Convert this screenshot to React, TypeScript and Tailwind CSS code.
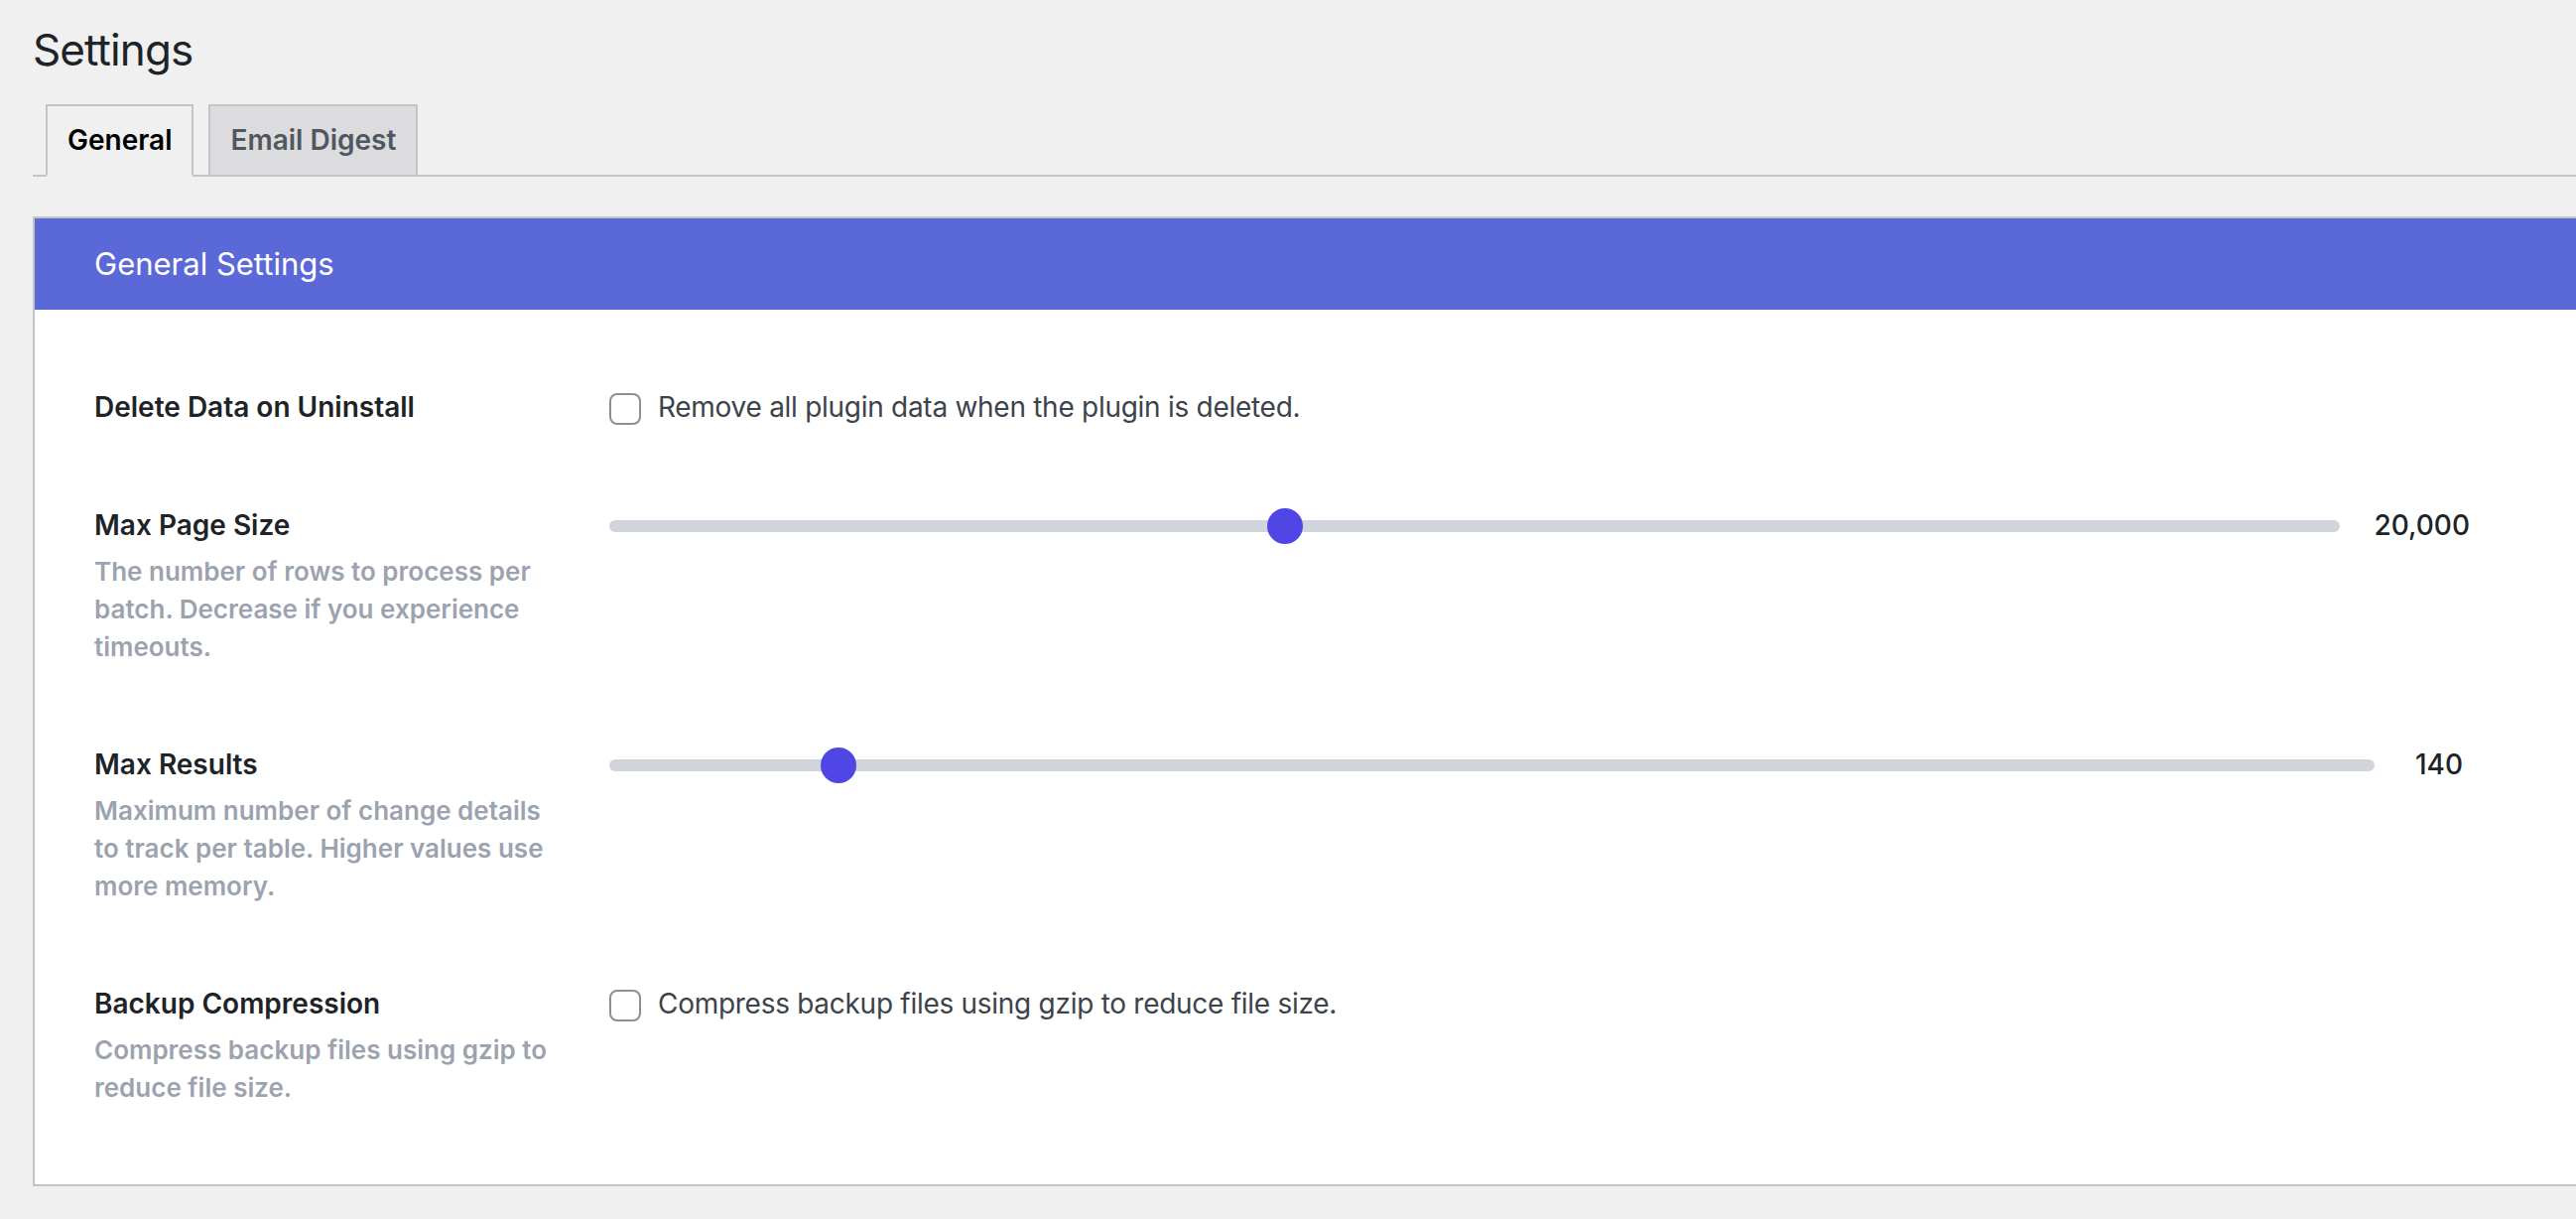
const ROWS = [
  {
    label: "Delete Data on Uninstall",
    kind: "checkbox" as const,
    text: "Remove all plugin data when the plugin is deleted.",
  },
  {
    label: "Max Page Size",
    desc: "The number of rows to process per batch. Decrease if you experience timeouts.",
    kind: "slider" as const,
    value: "20,000",
    pct: 0.388,
  },
  {
    label: "Max Results",
    desc: "Maximum number of change details to track per table. Higher values use more memory.",
    kind: "slider" as const,
    value: "140",
    pct: 0.1224,
  },
  {
    label: "Backup Compression",
    desc: "Compress backup files using gzip to reduce file size.",
    kind: "checkbox" as const,
    text: "Compress backup files using gzip to reduce file size.",
  },
];

function Slider({ value, pct }: { value: string; pct: number }) {
  return (
    <div className="flex h-[39px] items-center gap-[34px]">
      <div className="relative h-[12px] flex-1 rounded-full bg-[#d1d5db]">
        <div
          className="absolute top-1/2 h-[36px] w-[36px] -translate-y-1/2 rounded-full bg-[#4f46e5]"
          style={{ left: `calc(${pct} * (100% - 36px))` }}
        />
      </div>
      <span className="min-w-[62px] text-center text-[28px] font-medium leading-[39px] text-[#1d2327]">
        {value}
      </span>
    </div>
  );
}

function Checkbox({ text }: { text: string }) {
  return (
    <label className="flex h-[39px] items-center gap-[17px]">
      <span className="mt-[3px] h-[32px] w-[32px] shrink-0 rounded-[8px] border-2 border-[#8c8f94] bg-white" />
      <span className="text-[28px] leading-[39px] tracking-[-0.01em] text-[#3c434a]">{text}</span>
    </label>
  );
}

export default function App() {
  return (
    <div className="min-h-screen w-full overflow-hidden bg-[#f0f0f1] pl-[33px] font-[family-name:Inter,'Noto_Sans',sans-serif] text-[#1d2327]">
      <h1 className="pt-[21px] text-[44px] font-normal leading-[58px] tracking-[-0.02em]">Settings</h1>

      <div className="mt-[26px] flex border-b-2 border-[#c3c4c7]">
        <div className="-mb-[2px] ml-[13px] border-2 border-[#c3c4c7] border-b-[#f0f0f1] bg-[#f0f0f1] px-[20px] py-[14px] text-[28px] font-semibold leading-[41px] text-black">
          General
        </div>
        <div className="-mb-[2px] ml-[15px] border-2 border-[#c3c4c7] bg-[#dcdcde] px-[20px] py-[14px] text-[28px] font-semibold leading-[41px] text-[#50575e]">
          Email Digest
        </div>
      </div>

      <div className="mt-[40px] w-[2603px] border-2 border-[#c3c4c7] bg-white">
        <div className="bg-[#5b69d8] px-[60px] py-[28px] text-[31px] leading-[36px] text-white">
          General Settings
        </div>
        <div className="flex w-[2454px] flex-col gap-[80px] pb-[78px] pl-[60px] pt-[79px]">
          {ROWS.map((row) => (
            <div key={row.label} className="grid grid-cols-[470px_1fr] gap-x-[49px]">
              <div>
                <div className="text-[28px] font-semibold leading-[39px] text-[#1d2327]">{row.label}</div>
                {row.desc && (
                  <p className="mt-[8px] text-[26px] font-semibold leading-[38px] text-[#9ca3af]">{row.desc}</p>
                )}
              </div>
              <div>
                {row.kind === "slider" ? (
                  <Slider value={row.value!} pct={row.pct!} />
                ) : (
                  <Checkbox text={row.text!} />
                )}
              </div>
            </div>
          ))}
        </div>
      </div>
    </div>
  );
}
